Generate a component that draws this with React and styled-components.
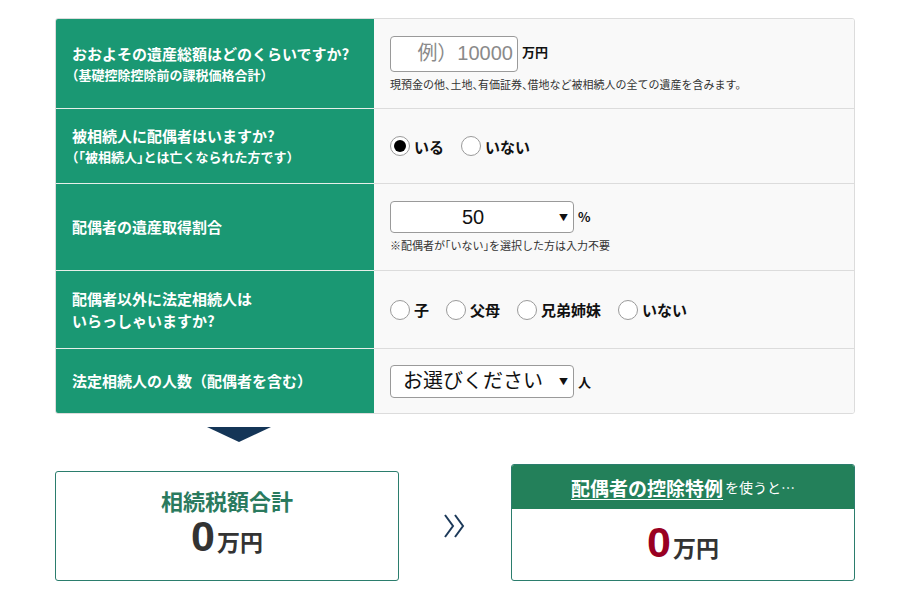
import React, { useState } from 'react';
import styled, { createGlobalStyle } from 'styled-components';

const GlobalStyle = createGlobalStyle`
  body {
    margin: 0;
    background: #fff;
    font-family: "Noto Sans CJK JP", "Liberation Sans", sans-serif;
    color: #222;
  }
`;

const Page = styled.div`
  width: 800px;
  margin-left: 55px;
  padding-top: 18px;
`;

const Table = styled.div`
  display: grid;
  grid-template-columns: 318px 1fr;
  border: 1px solid #dcdcdc;
  border-radius: 3px;
  overflow: hidden;
`;

const Head = styled.div`
  background: #1a9873;
  color: #fff;
  font-weight: bold;
  font-size: 15px;
  line-height: 22px;
  padding: 0 16px;
  height: ${(p) => p.h}px;
  display: flex;
  flex-direction: column;
  justify-content: center;
  border-top: ${(p) => (p.first ? 'none' : '1px solid #e6efe9')};
  box-sizing: border-box;
`;

const Sub = styled.span`
  font-size: 13px;
  line-height: 20px;
  font-feature-settings: "halt";
`;

const Cell = styled.div`
  background: #f9f9f9;
  height: ${(p) => p.h}px;
  padding: 0 16px;
  display: flex;
  flex-direction: column;
  justify-content: center;
  border-top: ${(p) => (p.first ? 'none' : '1px solid #dcdcdc')};
  box-sizing: border-box;
`;

const Line = styled.div`
  display: flex;
  align-items: center;
  gap: 4px;
`;

const AmountInput = styled.input`
  width: 128px;
  height: 36px;
  box-sizing: border-box;
  border: 1px solid #9a9a9a;
  border-radius: 4px;
  background: #fff;
  font-family: "Liberation Sans", "Noto Sans CJK JP", sans-serif;
  font-size: 20px;
  text-align: right;
  padding: 0 4px;
  &::placeholder {
    color: #8a8a8a;
  }
`;

const Unit = styled.span`
  font-size: 13px;
  font-weight: bold;
  color: #111;
  align-self: ${(p) => (p.top ? 'flex-start' : 'center')};
  margin-top: ${(p) => (p.top ? '6px' : '0')};
`;

const Note = styled.div`
  font-size: 11px;
  color: #333;
  margin-top: 4px;
  font-feature-settings: "halt";
`;

const RadioGroup = styled.div`
  display: flex;
  align-items: center;
  gap: 17px;
`;

const RadioLabel = styled.label`
  display: flex;
  align-items: center;
  gap: 4px;
  font-size: 15px;
  font-weight: bold;
  color: #111;
  cursor: pointer;
`;

const Radio = styled.input`
  appearance: none;
  margin: 0;
  width: 20px;
  height: 20px;
  border: 1px solid #9a9a9a;
  border-radius: 50%;
  background: #fff;
  position: relative;
  &:checked::after {
    content: '';
    position: absolute;
    inset: 3px;
    border-radius: 50%;
    background: #000;
  }
`;

const SelectWrap = styled.div`
  position: relative;
  width: 184px;
`;

const Select = styled.select`
  appearance: none;
  width: 100%;
  height: ${(p) => p.h}px;
  box-sizing: border-box;
  border: 1px solid #9a9a9a;
  border-radius: 4px;
  background: #fff;
  font-family: "Liberation Sans", "Noto Sans CJK JP", sans-serif;
  font-size: 20px;
  color: #111;
  text-align: center;
  text-align-last: center;
  padding: 0 18px 0 0;
`;

const Arrow = styled.span`
  position: absolute;
  right: 6px;
  top: 50%;
  transform: translateY(-50%);
  font-size: 9px;
  color: #111;
  pointer-events: none;
`;

const Down = styled.div`
  width: 0;
  height: 0;
  margin: 13px 0 0 152px;
  border-left: 32px solid transparent;
  border-right: 32px solid transparent;
  border-top: 15px solid #143557;
`;

const Results = styled.div`
  display: flex;
  align-items: flex-end;
  margin-top: 22px;
`;

const Box = styled.div`
  width: 344px;
  box-sizing: border-box;
  border: 1px solid #2b7d6d;
  border-radius: 3px;
  background: #fff;
  overflow: hidden;
`;

const PlainBody = styled.div`
  height: 108px;
  display: flex;
  flex-direction: column;
  align-items: center;
  justify-content: center;
`;

const BoxTitle = styled.div`
  font-size: 22px;
  font-weight: bold;
  color: #2a7a5e;
  line-height: 28px;
  margin-top: -4px;
`;

const Amount = styled.div`
  display: flex;
  align-items: baseline;
  color: #333;
  font-weight: bold;
  line-height: 44px;
`;

const Num = styled.span`
  font-family: "Liberation Sans", sans-serif;
  font-size: 43px;
  color: ${(p) => p.color || '#333'};
  margin-right: 2px;
`;

const Yen = styled.span`
  font-size: 23px;
  color: #333;
`;

const Chevron = styled.div`
  width: 112px;
  align-self: center;
  display: flex;
  justify-content: center;
  margin-top: 6px;
`;

const BoxHead = styled.div`
  background: #23805a;
  height: 44px;
  display: flex;
  align-items: center;
  justify-content: center;
  color: #fff;
`;

const Strong = styled.span`
  font-size: 19px;
  font-weight: bold;
  text-decoration: underline;
  text-underline-offset: 3px;
`;

const Small = styled.span`
  font-size: 14px;
  margin-left: 2px;
`;

const SpecialBody = styled.div`
  height: 71px;
  display: flex;
  align-items: center;
  justify-content: center;
`;

const App = () => {
  const [spouse, setSpouse] = useState('yes');
  const [heir, setHeir] = useState('');
  const [ratio, setRatio] = useState('50');
  const [count, setCount] = useState('');

  return (
    <>
      <GlobalStyle />
      <Page>
        <Table>
          <Head h={89} first>
            おおよその遺産総額はどのくらいですか?
            <Sub>（基礎控除控除前の課税価格合計）</Sub>
          </Head>
          <Cell h={89} first>
            <Line>
              <AmountInput placeholder="例）10000" />
              <Unit top>万円</Unit>
            </Line>
            <Note>現預金の他、土地、有価証券、借地など被相続人の全ての遺産を含みます。</Note>
          </Cell>

          <Head h={75}>
            被相続人に配偶者はいますか?
            <Sub>（「被相続人」とは亡くなられた方です）</Sub>
          </Head>
          <Cell h={75}>
            <RadioGroup>
              <RadioLabel>
                <Radio type="radio" name="spouse" checked={spouse === 'yes'} onChange={() => setSpouse('yes')} />
                いる
              </RadioLabel>
              <RadioLabel>
                <Radio type="radio" name="spouse" checked={spouse === 'no'} onChange={() => setSpouse('no')} />
                いない
              </RadioLabel>
            </RadioGroup>
          </Cell>

          <Head h={87}>配偶者の遺産取得割合</Head>
          <Cell h={87}>
            <Line>
              <SelectWrap>
                <Select h={32} value={ratio} onChange={(e) => setRatio(e.target.value)}>
                  {[0, 10, 20, 30, 40, 50, 60, 70, 80, 90, 100].map((v) => (
                    <option key={v} value={String(v)}>{v}</option>
                  ))}
                </Select>
                <Arrow>▼</Arrow>
              </SelectWrap>
              <Unit top>%</Unit>
            </Line>
            <Note>※配偶者が「いない」を選択した方は入力不要</Note>
          </Cell>

          <Head h={78}>
            配偶者以外に法定相続人は
            <br />
            いらっしゃいますか?
          </Head>
          <Cell h={78}>
            <RadioGroup>
              {['子', '父母', '兄弟姉妹', 'いない'].map((v) => (
                <RadioLabel key={v}>
                  <Radio type="radio" name="heir" checked={heir === v} onChange={() => setHeir(v)} />
                  {v}
                </RadioLabel>
              ))}
            </RadioGroup>
          </Cell>

          <Head h={65}>法定相続人の人数（配偶者を含む）</Head>
          <Cell h={65}>
            <Line>
              <SelectWrap>
                <Select h={33} value={count} onChange={(e) => setCount(e.target.value)}>
                  <option value="">お選びください</option>
                  {[1, 2, 3, 4, 5, 6, 7, 8, 9, 10].map((v) => (
                    <option key={v} value={String(v)}>{v}</option>
                  ))}
                </Select>
                <Arrow>▼</Arrow>
              </SelectWrap>
              <Unit>人</Unit>
            </Line>
          </Cell>
        </Table>

        <Down />

        <Results>
          <Box>
            <PlainBody>
              <BoxTitle>相続税額合計</BoxTitle>
              <Amount>
                <Num>0</Num>
                <Yen>万円</Yen>
              </Amount>
            </PlainBody>
          </Box>
          <Chevron>
            <svg width="26" height="28" viewBox="0 0 26 28" fill="none" stroke="#1d3a5a" strokeWidth="2">
              <path d="M3 3 L11 14 L3 25" />
              <path d="M13 3 L21 14 L13 25" />
            </svg>
          </Chevron>
          <Box>
            <BoxHead>
              <Strong>配偶者の控除特例</Strong>
              <Small>を使うと…</Small>
            </BoxHead>
            <SpecialBody>
              <Amount>
                <Num color="#990022">0</Num>
                <Yen>万円</Yen>
              </Amount>
            </SpecialBody>
          </Box>
        </Results>
      </Page>
    </>
  );
};

export default App;
